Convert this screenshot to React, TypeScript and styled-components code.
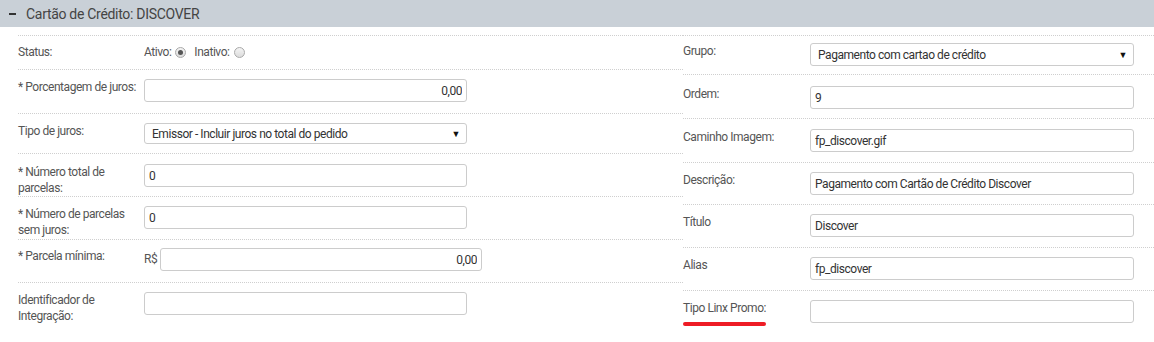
import styled, { createGlobalStyle } from "styled-components";

const GlobalStyle = createGlobalStyle`
  html, body {
    margin: 0;
    padding: 0;
    background: #fff;
  }
  body {
    font-family: Roboto, "Open Sans", "Liberation Sans", sans-serif;
    font-size: 12px;
    letter-spacing: -0.45px;
    color: #555;
  }
`;

const Panel = styled.section`
  width: 1154px;
  height: 342px;
  overflow: hidden;
`;

const PanelHeader = styled.header`
  height: 27px;
  background: #c9d0d7;
  display: flex;
  align-items: center;
  gap: 10px;
  padding-left: 9px;
  color: #444;
  font-size: 14px;
  letter-spacing: -0.3px;
`;

const Minus = styled.span`
  display: inline-block;
  width: 7px;
  height: 2px;
  background: #333;
`;

const Body = styled.div`
  display: grid;
  grid-template-columns: 665px 1fr;
  padding: 8px 0 0 18px;
`;

const Column = styled.div`
  display: flex;
  flex-direction: column;
`;

const Row = styled.div<{ $h?: number; $top?: number }>`
  display: flex;
  align-items: flex-start;
  box-sizing: border-box;
  height: ${(p) => p.$h ?? 43}px;
  border-top: 1px dotted #cfcfcf;
  padding-top: ${(p) => p.$top ?? 9}px;
`;

const Label = styled.label<{ $w: number }>`
  width: ${(p) => p.$w}px;
  flex: none;
  padding-right: 2px;
  line-height: 16px;
  color: #555;
  box-sizing: border-box;
`;

const Marked = styled.span`
  display: inline-block;
  &::after {
    content: "";
    display: block;
    height: 4px;
    border-radius: 2px;
    background: #ee1c25;
    margin-top: 6px;
  }
`;

const TextInput = styled.input<{ $w?: number; $right?: boolean }>`
  width: ${(p) => p.$w ?? 323}px;
  height: 23px;
  box-sizing: border-box;
  border: 1px solid #cccccc;
  border-radius: 3px;
  padding: 0 4px;
  font: inherit;
  letter-spacing: inherit;
  color: #333;
  text-align: ${(p) => (p.$right ? "right" : "left")};
  background: #fff;
  outline: none;
`;

const SelectBox = styled.div<{ $w?: number; $h?: number }>`
  width: ${(p) => p.$w ?? 323}px;
  height: ${(p) => p.$h ?? 21}px;
  box-sizing: border-box;
  border: 1px solid #cccccc;
  border-radius: 3px;
  padding: 0 6px 0 7px;
  display: flex;
  align-items: center;
  justify-content: space-between;
  color: #333;
  background: #fff;
`;

const Arrow = styled.span`
  font-size: 9px;
  color: #111;
`;

const Inline = styled.div`
  display: flex;
  align-items: center;
  gap: 4px;
  line-height: 16px;
  color: #555;
`;

const Radio = styled.span<{ $checked?: boolean }>`
  width: 9px;
  height: 9px;
  border-radius: 50%;
  border: 1px solid #a9a9a9;
  background: linear-gradient(#f4f4f4, #dcdcdc);
  display: inline-flex;
  align-items: center;
  justify-content: center;
  margin-right: 4px;
  &::after {
    content: "";
    width: 5px;
    height: 5px;
    border-radius: 50%;
    background: ${(p) => (p.$checked ? "#555" : "transparent")};
  }
`;

const Prefix = styled.span`
  width: 16px;
  flex: none;
  padding-top: 3px;
  line-height: 16px;
  color: #555;
`;

export default function App() {
  return (
    <>
      <GlobalStyle />
      <Panel>
        <PanelHeader>
          <Minus />
          Cartão de Crédito: DISCOVER
        </PanelHeader>
        <Body>
          <Column>
            <Row $h={34} $top={8}>
              <Label $w={126}>Status:</Label>
              <Inline>
                Ativo: <Radio $checked /> Inativo: <Radio />
              </Inline>
            </Row>
            <Row $h={44}>
              <Label $w={126}>* Porcentagem de juros:</Label>
              <TextInput defaultValue="0,00" $right />
            </Row>
            <Row $h={40}>
              <Label $w={126}>Tipo de juros:</Label>
              <SelectBox>
                Emissor - Incluir juros no total do pedido <Arrow>▼</Arrow>
              </SelectBox>
            </Row>
            <Row $top={10}>
              <Label $w={126}>* Número total de parcelas:</Label>
              <TextInput defaultValue="0" />
            </Row>
            <Row>
              <Label $w={126}>* Número de parcelas sem juros:</Label>
              <TextInput defaultValue="0" />
            </Row>
            <Row $top={8}>
              <Label $w={126}>* Parcela mínima:</Label>
              <Prefix>R$</Prefix>
              <TextInput defaultValue="0,00" $right $w={322} />
            </Row>
            <Row $h={50}>
              <Label $w={126}>Identificador de Integração:</Label>
              <TextInput />
            </Row>
          </Column>
          <Column>
            <Row $h={39} $top={7}>
              <Label $w={127}>Grupo:</Label>
              <SelectBox $w={324} $h={23}>
                Pagamento com cartao de crédito <Arrow>▼</Arrow>
              </SelectBox>
            </Row>
            <Row $h={44} $top={11}>
              <Label $w={127}>Ordem:</Label>
              <TextInput defaultValue="9" $w={324} />
            </Row>
            <Row $h={44} $top={10}>
              <Label $w={127}>Caminho Imagem:</Label>
              <TextInput defaultValue="fp_discover.gif" $w={324} />
            </Row>
            <Row $h={42}>
              <Label $w={127}>Descrição:</Label>
              <TextInput
                defaultValue="Pagamento com Cartão de Crédito Discover"
                $w={324}
              />
            </Row>
            <Row>
              <Label $w={127}>Título</Label>
              <TextInput defaultValue="Discover" $w={324} />
            </Row>
            <Row>
              <Label $w={127}>Alias</Label>
              <TextInput defaultValue="fp_discover" $w={324} />
            </Row>
            <Row $h={50}>
              <Label $w={127}>
                <Marked>Tipo Linx Promo:</Marked>
              </Label>
              <TextInput $w={324} />
            </Row>
          </Column>
        </Body>
      </Panel>
    </>
  );
}
